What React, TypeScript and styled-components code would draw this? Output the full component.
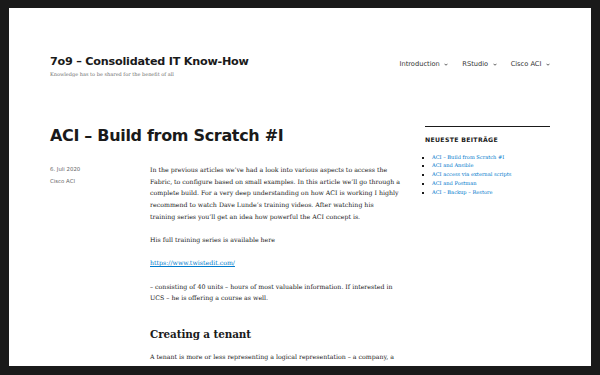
import styled, { createGlobalStyle } from "styled-components";

const sans = `"DejaVu Sans", "Inter", sans-serif`;
const serif = `"DejaVu Serif", "Liberation Serif", serif`;

const GlobalStyle = createGlobalStyle`
  html, body {
    margin: 0;
    padding: 0;
  }
  body {
    background: #1a1a1a;
    color: #1a1a1a;
  }
  * {
    box-sizing: border-box;
  }
`;

const recentPosts = [
  "ACI – Build from Scratch #I",
  "ACI and Ansible",
  "ACI access via external scripts",
  "ACI and Postman",
  "ACI – Backup – Restore",
];

const menu = ["Introduction", "RStudio", "Cisco ACI"];

function Chevron() {
  return (
    <svg width="4" height="3" viewBox="0 0 8 5" fill="none">
      <path d="M1 1l3 3 3-3" stroke="#1a1a1a" strokeWidth="1.4" />
    </svg>
  );
}

export default function App() {
  return (
    <>
      <GlobalStyle />
      <Frame>
        <Inner>
          <Header>
            <Branding>
              <SiteTitle>7o9 – Consolidated IT Know-How</SiteTitle>
              <Tagline>Knowledge has to be shared for the benefit of all</Tagline>
            </Branding>
            <Nav>
              {menu.map((item) => (
                <NavItem key={item} href="#">
                  {item}
                  <Chevron />
                </NavItem>
              ))}
            </Nav>
          </Header>

          <Content>
            <Main>
              <EntryTitle>ACI – Build from Scratch #I</EntryTitle>
              <Entry>
                <Meta>
                  <span>6. Juli 2020</span>
                  <span>Cisco ACI</span>
                </Meta>
                <Body>
                  <p>
                    In the previous articles we’ve had a look into various aspects to access the<br />
                    Fabric, to configure based on small examples. In this article we’ll go through a<br />
                    complete build. For a very deep understanding on how ACI is working I highly<br />
                    recommend to watch Dave Lunde’s training videos. After watching his<br />
                    training series you’ll get an idea how powerful the ACI concept is.
                  </p>
                  <p>His full training series is available here</p>
                  <p>
                    <a href="#">https://www.twistedit.com/</a>
                  </p>
                  <p>
                    – consisting of 40 units – hours of most valuable information. If interested in<br />
                    UCS – he is offering a course as well.
                  </p>
                  <h2>Creating a tenant</h2>
                  <p>
                    A tenant is more or less representing a logical representation – a company, a<br />
                    department or an application.
                  </p>
                </Body>
              </Entry>
            </Main>

            <Sidebar>
              <WidgetTitle>Neueste Beiträge</WidgetTitle>
              <PostList>
                {recentPosts.map((post) => (
                  <li key={post}>
                    <a href="#">{post}</a>
                  </li>
                ))}
              </PostList>
            </Sidebar>
          </Content>
        </Inner>
      </Frame>
    </>
  );
}

const Frame = styled.div`
  height: 100vh;
  border: 9px solid #1a1a1a;
  border-top-width: 8px;
  background: #fff;
  overflow: hidden;
`;

const Inner = styled.div`
  max-width: 550px;
  margin: 0 auto;
  padding: 0 25px;
`;

const Header = styled.header`
  display: flex;
  justify-content: space-between;
  align-items: flex-start;
  padding-top: 47px;
`;

const Branding = styled.div`
  display: flex;
  flex-direction: column;
`;

const SiteTitle = styled.h1`
  margin: 0;
  font-family: ${sans};
  font-weight: 700;
  font-size: 11.2px;
  letter-spacing: -0.22px;
  line-height: 1.25;
  color: #1a1a1a;
`;

const Tagline = styled.p`
  margin: 1.5px 0 0;
  font-family: ${serif};
  font-size: 5px;
  line-height: 1.5;
  color: #707070;
`;

const Nav = styled.nav`
  display: flex;
  margin-top: 4px;
  margin-right: -7px;
`;

const NavItem = styled.a`
  display: flex;
  align-items: center;
  gap: 4.5px;
  padding: 0 7px;
  font-family: ${sans};
  font-size: 6.67px;
  line-height: 1.5;
  color: #333;
  text-decoration: none;
`;

const Content = styled.div`
  display: flex;
  gap: 25px;
  padding-top: 48px;
`;

const Main = styled.main`
  width: 350px;
  flex-shrink: 0;
`;

const EntryTitle = styled.h1`
  margin: 0 0 18px;
  font-family: ${sans};
  font-weight: 700;
  font-size: 16px;
  letter-spacing: -0.32px;
  line-height: 1.25;
  color: #1a1a1a;
`;

const Entry = styled.article`
  display: flex;
`;

const Meta = styled.div`
  width: 100px;
  flex-shrink: 0;
  display: flex;
  flex-direction: column;
  gap: 3.5px;
  padding-top: 1px;
  font-family: ${sans};
  font-size: 5.4px;
  line-height: 1.6;
  color: #686868;
`;

const Body = styled.div`
  width: 250px;
  flex-shrink: 0;
  font-family: ${serif};
  font-size: 6.25px;
  line-height: 11.67px;
  color: #1a1a1a;
  white-space: nowrap;

  p {
    margin: 0 0 11.67px;
  }

  a {
    color: #007acc;
    text-decoration: underline;
  }

  h2 {
    margin: 24px 0 10px;
    font-size: 10.4px;
    letter-spacing: -0.1px;
    line-height: 1.25;
    font-weight: 700;
  }
`;

const Sidebar = styled.aside`
  width: 125px;
  flex-shrink: 0;
  border-top: 1.67px solid #1a1a1a;
`;

const WidgetTitle = styled.h2`
  margin: 9px 0 8.5px;
  font-family: ${sans};
  font-weight: 700;
  font-size: 6.2px;
  line-height: 1.3;
  letter-spacing: 0.05em;
  text-transform: uppercase;
  color: #1a1a1a;
`;

const PostList = styled.ul`
  margin: 0;
  padding-left: 7px;
  list-style: square;
  font-family: ${serif};
  font-size: 5.1px;
  line-height: 8.75px;

  li::marker {
    color: #1a1a1a;
    font-size: 5px;
  }

  a {
    color: #007acc;
    text-decoration: none;
  }
`;
